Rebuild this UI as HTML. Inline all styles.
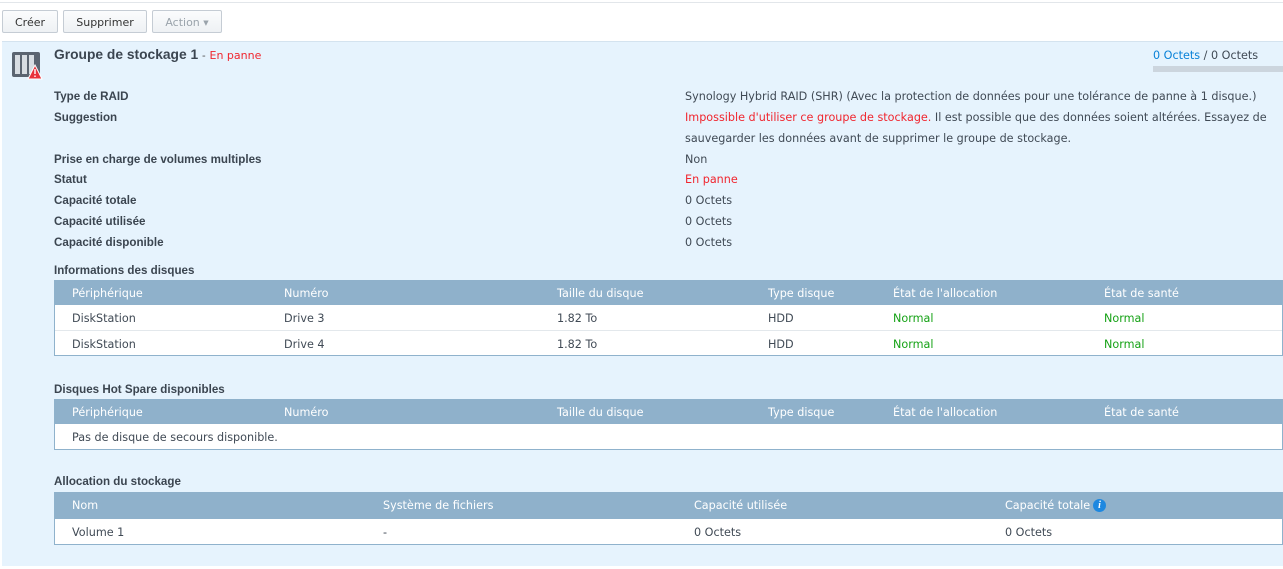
<!DOCTYPE html>
<html><head><meta charset="utf-8"><style>
*{margin:0;padding:0;box-sizing:border-box}
body{width:1283px;height:569px;overflow:hidden;background:#fff;font-family:"DejaVu Sans","Liberation Sans",sans-serif;font-size:11.2px;color:#404a55;position:relative}
.a{position:absolute;white-space:nowrap}
.btn{position:absolute;top:10px;height:23px;border:1px solid #c5ccd4;border-radius:2px;background:linear-gradient(#fbfcfd,#eef1f4);font-size:11px;line-height:23px;text-align:center;color:#333}
.panel{position:absolute;left:2px;top:41px;width:1281px;height:525px;background:#e6f3fd;border-top:1px solid #d4e3ef}
.b{font-family:"Liberation Sans",sans-serif;font-weight:bold;font-size:11.6px;color:#3b4550}
.red{color:#f0262f}
.grn{color:#16a216}
.tbl{position:absolute;left:54px;width:1229px;border:1px solid #8fb2cc;border-top:none;background:#fff}
.hd{height:25px;background:#8fb1cb;color:#fff;position:relative}
.row{height:25px;position:relative;border-top:1px solid #e3e8ec}
.tbl .a{top:7px}
</style></head><body>
<div style="position:absolute;left:0;top:0;width:1283px;height:3px;border-bottom:1px solid #e2e6ea"></div>
<div class="btn" style="left:2px;width:56px">Créer</div>
<div class="btn" style="left:63px;width:84px">Supprimer</div>
<div class="btn" style="left:152px;width:70px;color:#9aa3ab">Action <span style="font-size:7px;vertical-align:1px">▼</span></div>
<div class="panel"></div>
<svg class="a" style="left:11px;top:51px" width="32" height="29" viewBox="0 0 32 29">
<rect x="1" y="1" width="28" height="25" rx="2" fill="#5b6470"/>
<rect x="4" y="4" width="5" height="19" fill="#d8dde2"/><rect x="11" y="4" width="5" height="19" fill="#d8dde2"/><rect x="18" y="4" width="5" height="19" fill="#d8dde2"/>
<path d="M24 14 L31 28 L17 28 Z" fill="#e8333a" stroke="#fff" stroke-width="1"/>
<rect x="23.3" y="18" width="1.4" height="5" fill="#fff"/><rect x="23.3" y="24.5" width="1.4" height="1.5" fill="#fff"/>
</svg>
<div class="a b" style="left:54px;top:47px;font-size:13.8px">Groupe de stockage 1 <span style="font-weight:normal;color:#555;font-size:11px">-</span> <span class="red" style="font-weight:normal;font-size:11px;font-family:'DejaVu Sans',sans-serif">En panne</span></div>
<div class="a" style="left:1153px;top:49px"><span style="color:#0a82d8">0 Octets</span> / 0 Octets</div>
<div class="a" style="left:1153px;top:66px;width:130px;height:6px;background:#ccd5de"></div>
<div class="a b" style="left:54px;top:90px">Type de RAID</div>
<div class="a" style="left:685px;top:90px">Synology Hybrid RAID (SHR) (Avec la protection de données pour une tolérance de panne à 1 disque.)</div>
<div class="a b" style="left:54px;top:111px">Suggestion</div>
<div class="a" style="left:685px;top:111px"><span class="red">Impossible d'utiliser ce groupe de stockage.</span> Il est possible que des données soient altérées. Essayez de</div>
<div class="a" style="left:685px;top:132px">sauvegarder les données avant de supprimer le groupe de stockage.</div>
<div class="a b" style="left:54px;top:153px">Prise en charge de volumes multiples</div><div class="a" style="left:685px;top:153px">Non</div>
<div class="a b" style="left:54px;top:173px">Statut</div><div class="a red" style="left:685px;top:173px">En panne</div>
<div class="a b" style="left:54px;top:194px">Capacité totale</div><div class="a" style="left:685px;top:194px">0 Octets</div>
<div class="a b" style="left:54px;top:215px">Capacité utilisée</div><div class="a" style="left:685px;top:215px">0 Octets</div>
<div class="a b" style="left:54px;top:236px">Capacité disponible</div><div class="a" style="left:685px;top:236px">0 Octets</div>

<div class="a b" style="left:54px;top:264px">Informations des disques</div>
<div class="tbl" style="top:280px">
<div class="hd"><span class="a" style="left:17px">Périphérique</span><span class="a" style="left:229px">Numéro</span><span class="a" style="left:502px">Taille du disque</span><span class="a" style="left:713px">Type disque</span><span class="a" style="left:838px">État de l'allocation</span><span class="a" style="left:1049px">État de santé</span></div>
<div class="row" style="border-top:none"><span class="a" style="left:17px">DiskStation</span><span class="a" style="left:229px">Drive 3</span><span class="a" style="left:502px">1.82 To</span><span class="a" style="left:713px">HDD</span><span class="a grn" style="left:838px">Normal</span><span class="a grn" style="left:1049px">Normal</span></div>
<div class="row"><span class="a" style="left:17px">DiskStation</span><span class="a" style="left:229px">Drive 4</span><span class="a" style="left:502px">1.82 To</span><span class="a" style="left:713px">HDD</span><span class="a grn" style="left:838px">Normal</span><span class="a grn" style="left:1049px">Normal</span></div>
</div>

<div class="a b" style="left:54px;top:383px">Disques Hot Spare disponibles</div>
<div class="tbl" style="top:399px">
<div class="hd"><span class="a" style="left:17px">Périphérique</span><span class="a" style="left:229px">Numéro</span><span class="a" style="left:502px">Taille du disque</span><span class="a" style="left:713px">Type disque</span><span class="a" style="left:838px">État de l'allocation</span><span class="a" style="left:1049px">État de santé</span></div>
<div class="row" style="border-top:none"><span class="a" style="left:17px">Pas de disque de secours disponible.</span></div>
</div>

<div class="a b" style="left:54px;top:475px">Allocation du stockage</div>
<div class="tbl" style="top:492px">
<div class="hd" style="height:27px"><span class="a" style="left:17px;top:7px">Nom</span><span class="a" style="left:328px;top:7px">Système de fichiers</span><span class="a" style="left:639px;top:7px">Capacité utilisée</span><span class="a" style="left:950px;top:7px">Capacité totale</span><span class="a" style="left:1038px;top:7px;width:13px;height:13px;border-radius:50%;background:#1e88e0;color:#fff;font:bold italic 10px 'Liberation Serif',serif;text-align:center;line-height:13px">i</span></div>
<div class="row" style="border-top:none"><span class="a" style="left:17px">Volume 1</span><span class="a" style="left:328px">-</span><span class="a" style="left:639px">0 Octets</span><span class="a" style="left:950px">0 Octets</span></div>
</div>
</body></html>
